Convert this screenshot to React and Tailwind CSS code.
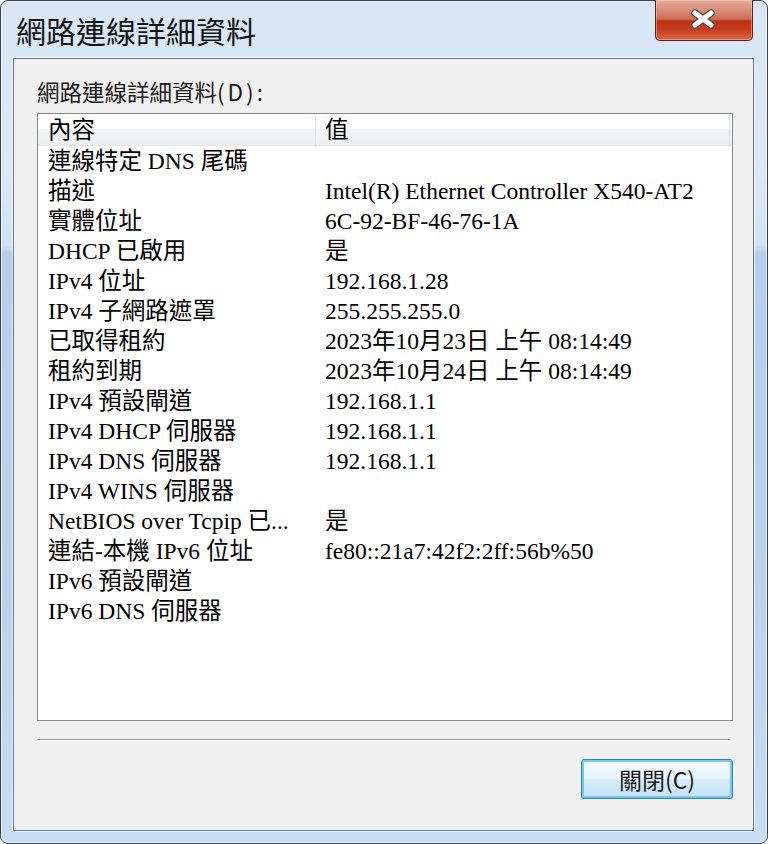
const rows = [
  ['連線特定 DNS 尾碼', ''],
  ['描述', 'Intel(R) Ethernet Controller X540-AT2'],
  ['實體位址', '6C-92-BF-46-76-1A'],
  ['DHCP 已啟用', '是'],
  ['IPv4 位址', '192.168.1.28'],
  ['IPv4 子網路遮罩', '255.255.255.0'],
  ['已取得租約', '2023年10月23日 上午 08:14:49'],
  ['租約到期', '2023年10月24日 上午 08:14:49'],
  ['IPv4 預設閘道', '192.168.1.1'],
  ['IPv4 DHCP 伺服器', '192.168.1.1'],
  ['IPv4 DNS 伺服器', '192.168.1.1'],
  ['IPv4 WINS 伺服器', ''],
  ['NetBIOS over Tcpip 已...', '是'],
  ['連結-本機 IPv6 位址', 'fe80::21a7:42f2:2ff:56b%50'],
  ['IPv6 預設閘道', ''],
  ['IPv6 DNS 伺服器', ''],
];

const CloseButton = () => (
  <button className="-mt-px flex h-[41px] w-[98px] items-center justify-center rounded-b-[5px] border border-t-0 border-[#5a2219] bg-[linear-gradient(180deg,#e6ad9f_0%,#d88d78_25%,#cb6e56_48%,#bd3217_52%,#c63e22_75%,#dc6a48_100%)] shadow-[inset_0_0_0_1px_rgba(255,210,190,0.45)]">
    <svg width="26" height="22" viewBox="0 0 26 22" className="-ml-[2px] -mt-[3px]">
      <path d="M5 5 L21 17 M21 5 L5 17" stroke="#4b4b4b" strokeWidth="7.5" strokeLinecap="round" />
      <path d="M5 5 L21 17 M21 5 L5 17" stroke="#ffffff" strokeWidth="5" strokeLinecap="round" />
    </svg>
  </button>
);

const ListHeader = () => (
  <div className="grid h-[32px] grid-cols-[278px_414px_1fr] border-b border-[#e3e5e8] bg-[linear-gradient(180deg,#ffffff_0%,#ffffff_45%,#f3f4f6_50%,#eceef1_100%)] text-[23.5px] leading-[33px]">
    <div className="border-r border-[#dfe1e4] pl-[10px]">內容</div>
    <div className="border-r border-[#dfe1e4] pl-[9px]">值</div>
    <div />
  </div>
);

export default function App() {
  return (
    <div className="h-[844px] w-[768px] bg-white">
      <div className="flex h-full flex-col rounded-[8px] border border-[#39424d] bg-[linear-gradient(180deg,#d8e6f5_0%,#dce9f6_20%,#d2e2f3_29%,#b7cfea_30%,#bbd2ec_70%,#c9ddf2_100%)] shadow-[inset_0_0_0_1px_rgba(255,255,255,0.55)]">
        <div className="flex h-[57px] shrink-0 items-start justify-between pl-[15px] pr-[14px]">
          <h1 className="pt-[9px] font-['Noto_Sans_CJK_TC',sans-serif] text-[30px] leading-[40px] text-[#141414]">
            網路連線詳細資料
          </h1>
          <CloseButton />
        </div>

        <div className="mb-[12px] ml-[12px] mr-[13px] flex flex-1 flex-col border border-[#6b7786] bg-[#f0f0f0] pl-[23px] pr-[20px] shadow-[0_0_0_1px_rgba(255,255,255,0.6)]">
          <div className="pt-[18px] font-['Noto_Sans_CJK_TC',sans-serif] text-[22.5px] leading-[28px] text-[#1a1a1a]">
            網路連線詳細資料<span className="tracking-[3px]">(D):</span>
          </div>

          <div className="mt-[8px] h-[608px] border border-[#828790] bg-white font-['Liberation_Serif','Noto_Sans_CJK_TC',serif] text-black">
            <ListHeader />
            {rows.map(([label, value]) => (
              <div key={label} className="grid h-[30px] grid-cols-[278px_1fr] text-[23.5px] leading-[30px]">
                <div className="whitespace-nowrap pl-[10px]">{label}</div>
                <div className="whitespace-nowrap pl-[9px]">{value}</div>
              </div>
            ))}
          </div>

          <div className="mr-[3px] mt-[18px] h-[2px] border-b border-t border-b-white border-t-[#a0a0a0]" />

          <div className="mt-[18px] flex justify-end">
            <button className="h-[40px] w-[152px] rounded-[3px] border border-[#3c7fb1] bg-[linear-gradient(180deg,#f4fafe_0%,#e8f4fc_48%,#d5ebf8_52%,#c3e2f4_100%)] font-['Noto_Sans_CJK_TC',sans-serif] text-[23px] leading-[38px] text-[#1a1a1a] shadow-[inset_0_0_0_2px_#6fcaf0]">
              關閉(C)
            </button>
          </div>
        </div>
      </div>
    </div>
  );
}
